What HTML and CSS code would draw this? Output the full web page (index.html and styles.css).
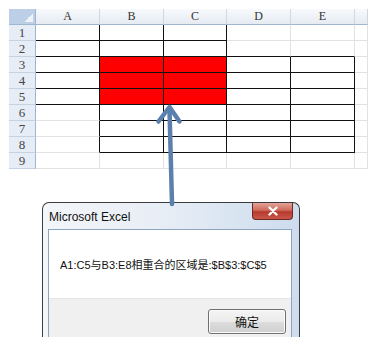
FILE: index.html
```html
<!DOCTYPE html>
<html>
<head>
<meta charset="utf-8">
<link rel="stylesheet" href="styles.css">
</head>
<body>
<div class="page">
  <div class="sheet">
    <div class="corner"></div><div class="ch">A</div><div class="ch">B</div><div class="ch">C</div><div class="ch">D</div><div class="ch">E</div><div class="ch"></div>

    <div class="rh">1</div><div class="c br bb"></div><div class="c br bb"></div><div class="c br bb"></div><div class="c"></div><div class="c"></div><div class="c"></div>
    <div class="rh">2</div><div class="c br bb"></div><div class="c br bb"></div><div class="c br bb"></div><div class="c bb"></div><div class="c bb"></div><div class="c"></div>
    <div class="rh">3</div><div class="c br bb"></div><div class="c br bb red"></div><div class="c br bb red"></div><div class="c br bb"></div><div class="c br bb"></div><div class="c"></div>
    <div class="rh">4</div><div class="c br bb"></div><div class="c br bb red"></div><div class="c br bb red"></div><div class="c br bb"></div><div class="c br bb"></div><div class="c"></div>
    <div class="rh">5</div><div class="c br bb"></div><div class="c br bb red"></div><div class="c br bb red"></div><div class="c br bb"></div><div class="c br bb"></div><div class="c"></div>
    <div class="rh">6</div><div class="c br"></div><div class="c br bb"></div><div class="c br bb"></div><div class="c br bb"></div><div class="c br bb"></div><div class="c"></div>
    <div class="rh">7</div><div class="c br"></div><div class="c br bb"></div><div class="c br bb"></div><div class="c br bb"></div><div class="c br bb"></div><div class="c"></div>
    <div class="rh">8</div><div class="c br"></div><div class="c br bb"></div><div class="c br bb"></div><div class="c br bb"></div><div class="c br bb"></div><div class="c"></div>
    <div class="rh">9</div><div class="c"></div><div class="c"></div><div class="c"></div><div class="c"></div><div class="c"></div><div class="c"></div>
  </div>

  <div class="dialog">
    <div class="titlebar">
      <span class="title">Microsoft Excel</span>
      <div class="close">
        <svg width="12" height="10" viewBox="0 0 12 10"><path d="M2.5 1.5 L9.5 8.5 M9.5 1.5 L2.5 8.5" stroke="#fff" stroke-width="2.4" stroke-linecap="round"/></svg>
      </div>
    </div>
    <div class="client">
      <div class="msg">A1:C5与B3:E8相重合的区域是:$B$3:$C$5</div>
      <div class="footer"><div class="btn">确定</div></div>
    </div>
  </div>

  <svg class="arrow" width="377" height="337" viewBox="0 0 377 337">
    <g fill="none" stroke="#5b80ad" stroke-width="4.5" stroke-linecap="round" stroke-linejoin="round">
      <path d="M172 204 L169.5 110"/>
      <path d="M158.5 121.5 L169.5 107 L179.5 121.5"/>
    </g>
  </svg>
</div>
</body>
</html>
```

FILE: styles.css
```css
html, body {
  margin: 0;
  padding: 0;
  background: #fff;
}
.page {
  position: relative;
  width: 377px;
  height: 337px;
  overflow: hidden;
}
.sheet {
  margin: 9px 0 0 9px;
  display: grid;
  grid-template-columns: 27px 64px 64px 63px 64px 64px 13px;
  grid-template-rows: repeat(10, 16px);
  width: 359px;
}
.sheet > div {
  box-sizing: border-box;
}
.corner {
  background:
    linear-gradient(135deg, transparent 50%, #eef3fa 50%) right 2px bottom 2px / 9px 9px no-repeat,
    #bccfe6;
  border-right: 1px solid #9eb6ce;
  border-bottom: 1px solid #9eb6ce;
}
.ch {
  background: linear-gradient(#f7f9fc, #e6ebf2);
  border-right: 1px solid #d0d7e2;
  border-bottom: 1px solid #9eb6ce;
  font: 12px/15px "Liberation Serif", serif;
  color: #333;
  text-align: center;
}
.rh {
  background: #e6edf7;
  border-right: 1px solid #9eb6ce;
  border-bottom: 1px solid #c5d2e2;
  font: 13px/16px "Liberation Serif", serif;
  color: #444;
  text-align: center;
}
.c {
  border-right: 1px solid #e2e2e2;
  border-bottom: 1px solid #e2e2e2;
  background: #fff;
}
.c.br { border-right-color: #111; }
.c.bb { border-bottom-color: #111; }
.c.red { background: #ff0000; }

.dialog {
  margin: 33px 0 0 42px;
  width: 258px;
  height: 150px;
  box-sizing: border-box;
  border: 1px solid #3c3c3c;
  border-bottom: none;
  border-radius: 7px 7px 0 0;
  background: linear-gradient(90deg, #f3f6fa 0%, #e8eef6 45%, #cddcee 100%);
  padding: 0 6px 0 5px;
}
.titlebar {
  height: 26px;
  display: flex;
  align-items: flex-start;
  justify-content: space-between;
}
.title {
  font: 12px "Liberation Sans", sans-serif;
  color: #111;
  margin: 7px 0 0 1px;
}
.close {
  width: 41px;
  height: 17px;
  box-sizing: border-box;
  border: 1px solid #6e2a22;
  border-top: none;
  border-radius: 0 0 4px 4px;
  background: linear-gradient(#e3a497 0%, #cf6a5d 45%, #b73a2c 55%, #c9564a 100%);
  display: flex;
  align-items: center;
  justify-content: center;
}
.client {
  border: 1px solid #8ea3bd;
  border-bottom: none;
  background: #fff;
  width: 244px;
  box-sizing: border-box;
}
.msg {
  height: 68px;
  padding-left: 11px;
  display: flex;
  align-items: center;
  font: 11px "Liberation Sans", "Noto Sans CJK SC", sans-serif;
  color: #111;
}
.footer {
  background: #f0f0f0;
  border-top: 1px solid #e6e6e6;
  height: 60px;
  display: flex;
  justify-content: flex-end;
  align-items: flex-start;
  padding: 10px 5px 0 0;
}
.btn {
  width: 78px;
  height: 25px;
  box-sizing: border-box;
  border: 1px solid #707070;
  border-radius: 3px;
  background: linear-gradient(#f4f4f4 0%, #ebebeb 50%, #dddddd 51%, #cfcfcf 100%);
  box-shadow: inset 0 0 0 1px #fbfbfb;
  font: 12px/23px "Noto Sans CJK SC", sans-serif;
  color: #111;
  text-align: center;
}
.arrow {
  position: absolute;
  left: 0;
  top: 0;
  pointer-events: none;
}
```
